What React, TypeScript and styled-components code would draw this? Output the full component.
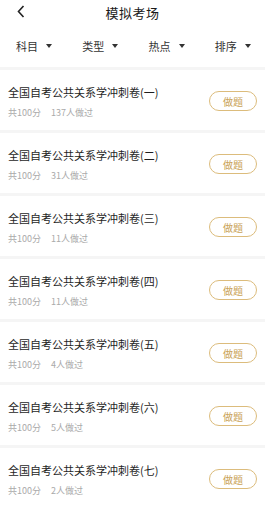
import * as React from 'react';
import styled, { createGlobalStyle } from 'styled-components';

const GlobalStyle = createGlobalStyle`
    html, body {
        margin: 0;
        padding: 0;
        background: #ffffff;
    }
    body {
        font-family: "Noto Sans CJK SC", "Noto Sans", sans-serif;
        color: #222222;
    }
`;

const papers = [
    { no: '一', count: 137 },
    { no: '二', count: 31 },
    { no: '三', count: 11 },
    { no: '四', count: 11 },
    { no: '五', count: 4 },
    { no: '六', count: 5 },
    { no: '七', count: 2 }
];

const filters = ['科目', '类型', '热点', '排序'];

const Page = styled.div`
    width: 265px;
    height: 508px;
    overflow: hidden;
    background: #f5f5f5;
`;

const Header = styled.div`
    height: 24px;
    display: flex;
    align-items: center;
    justify-content: center;
    position: relative;
    background: #ffffff;
`;

const BackButton = styled.div`
    position: absolute;
    left: 15px;
    top: 3px;
    width: 12px;
    height: 16px;
    display: flex;
    align-items: center;
    justify-content: center;
`;

const Title = styled.div`
    font-size: 13px;
    color: #1a1a1a;
    letter-spacing: 0.5px;
`;

const FilterBar = styled.div`
    height: 43px;
    display: grid;
    grid-template-columns: repeat(4, 1fr);
    align-items: center;
    background: #ffffff;
    margin-bottom: 3px;
`;

const Filter = styled.div`
    display: flex;
    align-items: center;
    padding-left: 16px;
    gap: 8px;
    font-size: 11px;
    color: #333333;
`;

const Caret = styled.span`
    width: 0;
    height: 0;
    border-left: 3px solid transparent;
    border-right: 3px solid transparent;
    border-top: 4px solid #333333;
`;

const List = styled.div`
    display: flex;
    flex-direction: column;
    gap: 3px;
`;

const Row = styled.div`
    height: 60px;
    background: #ffffff;
    display: flex;
    align-items: center;
    justify-content: space-between;
    padding: 0 8px;
`;

const Info = styled.div`
    display: flex;
    flex-direction: column;
    gap: 8px;
    margin-top: 2px;
`;

const PaperName = styled.div`
    font-size: 11px;
    line-height: 14px;
    color: #1e1e1e;
`;

const Meta = styled.div`
    display: flex;
    gap: 10px;
    font-size: 9px;
    line-height: 11px;
    color: #aaaaaa;
`;

const DoButton = styled.div`
    width: 46px;
    height: 18px;
    border: 1px solid #dcbc7c;
    border-radius: 10px;
    display: flex;
    align-items: center;
    justify-content: center;
    font-size: 10px;
    color: #c9a256;
    margin-top: 2px;
`;

const App = () => {
    return (
        <Page>
            <GlobalStyle />
            <Header>
                <BackButton>
                    <svg width="8" height="13" viewBox="0 0 8 13">
                        <path d="M6.5 1 L1.5 6.5 L6.5 12" fill="none" stroke="#222" strokeWidth="1.6" />
                    </svg>
                </BackButton>
                <Title>模拟考场</Title>
            </Header>
            <FilterBar>
                { filters.map(f => (
                    <Filter key={ f }>
                        { f }
                        <Caret />
                    </Filter>
                )) }
            </FilterBar>
            <List>
                { papers.map(p => (
                    <Row key={ p.no }>
                        <Info>
                            <PaperName>全国自考公共关系学冲刺卷({ p.no })</PaperName>
                            <Meta>
                                <span>共100分</span>
                                <span>{ p.count }人做过</span>
                            </Meta>
                        </Info>
                        <DoButton>做题</DoButton>
                    </Row>
                )) }
            </List>
        </Page>
    );
};

export default App;
